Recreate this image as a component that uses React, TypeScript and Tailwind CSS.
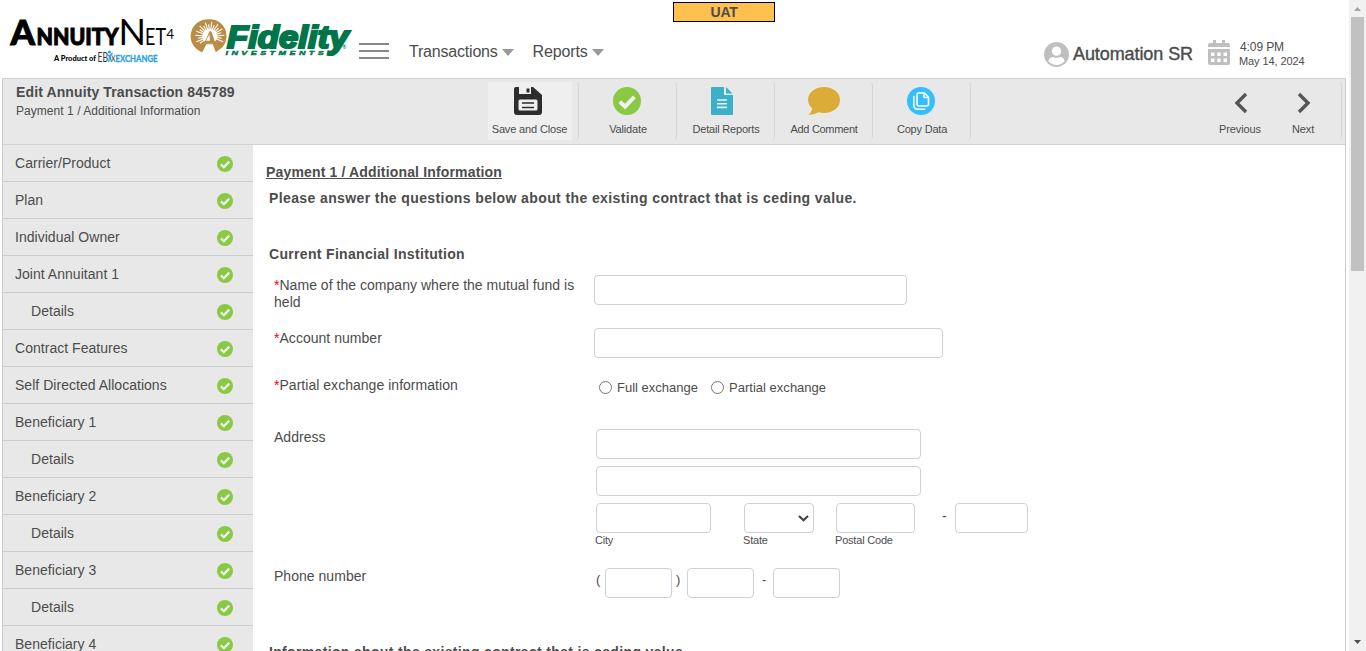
import React from "react";

type Row = { label: string; nested?: boolean };

const steps: Row[] = [
  { label: "Carrier/Product" },
  { label: "Plan" },
  { label: "Individual Owner" },
  { label: "Joint Annuitant 1" },
  { label: "Details", nested: true },
  { label: "Contract Features" },
  { label: "Self Directed Allocations" },
  { label: "Beneficiary 1" },
  { label: "Details", nested: true },
  { label: "Beneficiary 2" },
  { label: "Details", nested: true },
  { label: "Beneficiary 3" },
  { label: "Details", nested: true },
  { label: "Beneficiary 4" },
];

function CheckBadge({ className }: { className: string }) {
  return (
    <svg viewBox="0 0 28 28" className={className}>
      <circle cx="14" cy="14" r="14" fill="#8ac943" />
      <path d="M6.8 14.6 L12 19.6 L21.4 9.8" fill="none" stroke="#f1f1f1" strokeWidth="4" />
    </svg>
  );
}

function AnnuityNetLogo() {
  return (
    <svg viewBox="0 0 170 48" className="h-12 w-[170px] shrink-0 overflow-visible">
      <g fill="#000" fontFamily="Lato, sans-serif">
        <g stroke="#000" strokeWidth="1">
          <text x="1.500" y="28" fontSize="35" fontWeight="900" textLength="24.500" lengthAdjust="spacingAndGlyphs">A</text>
          <text x="27.500" y="28" fontSize="23" fontWeight="900" textLength="82" lengthAdjust="spacingAndGlyphs">NNUITY</text>
        </g>
        <text x="109.500" y="28.300" fontSize="36" fontWeight="400" textLength="27.500" lengthAdjust="spacingAndGlyphs">N</text>
        <text x="136" y="28.300" fontSize="23.500" fontWeight="400" textLength="21" lengthAdjust="spacingAndGlyphs">ET</text>
        <text x="157.500" y="21.500" fontSize="12.500" textLength="7.500" lengthAdjust="spacingAndGlyphs">4</text>
        <text x="45" y="43.700" fontSize="8" fontWeight="900" textLength="42" lengthAdjust="spacingAndGlyphs">A Product of</text>
      </g>
      <g fontFamily="Lato, sans-serif">
        <text x="88.500" y="45" fontSize="12.500" fill="#333" textLength="10.500" lengthAdjust="spacingAndGlyphs">EB</text>
        <text x="102" y="45" fontSize="9" fill="#333" textLength="4.500" lengthAdjust="spacingAndGlyphs">X</text>
        <text x="106.500" y="44.700" fontSize="8.800" fontWeight="700" fill="#2c9fdd" stroke="#2c9fdd" strokeWidth=".3" textLength="42" lengthAdjust="spacingAndGlyphs">EXCHANGE</text>
      </g>
      <circle cx="100.500" cy="35" r="1.500" fill="#2c9fdd" />
      <path d="M98 37.500 L100.500 39 L103.500 36 M100.500 38 L99.800 45 M101 39 L102.500 45" stroke="#2c9fdd" strokeWidth="1.300" fill="none" />
    </svg>
  );
}

const rayAngles = [-160, -147, -134, -121, -108, -95, -82, -69, -56, -43, -30, -17, -4, 9, 22, 145, 158, 171, 184];

function FidelityLogo() {
  return (
    <svg viewBox="0 0 162 40" className="h-10 w-[162px] shrink-0 overflow-visible">
      <g transform="translate(0.3 0.3)">
        <path d="M18 0 A16.700 16.700 0 0 1 27 30.800 L24 33 L21 25 L14.500 25 L10.500 33 A17 17 0 0 1 18 0Z" fill="#b98d45" transform="translate(1.500 0)" />
        <g transform="translate(1.500 0)">
          <g stroke="#fff" strokeWidth="1.100">
            {rayAngles.map((a, i) => {
              const r = (a * Math.PI) / 180;
              const far = i % 2 === 0 ? 14.5 : 12;
              return (
                <path
                  key={a}
                  d={`M${18 + Math.cos(r) * 5} ${17 + Math.sin(r) * 5} L${18 + Math.cos(r) * far} ${17 + Math.sin(r) * far}`}
                />
              );
            })}
          </g>
          <circle cx="18" cy="17" r="7.500" fill="#fff" />
          <path d="M9.500 30 L17.800 12 L19.500 12 L26 31 L21 24.500 L13.500 24.500 L10.500 33Z" fill="#b98d45" />
          <path d="M14.200 21.500 L17.600 15 L18.300 21.500Z" fill="#fff" />
        </g>
      </g>
      <g fill="#00754a" fontFamily="'Liberation Sans', Arial, sans-serif" fontStyle="italic" fontWeight="700">
        <text x="37" y="29" fontSize="30.500" stroke="#00754a" strokeWidth="2.200" textLength="121.500" lengthAdjust="spacingAndGlyphs">Fidelity</text>
        <g stroke="#00754a" strokeWidth=".4">
          <text x="35.500" y="36" fontSize="6" transform="translate(35.500 0) scale(1.5 1) translate(-35.500 0)" textLength="65.500" lengthAdjust="spacing">INVESTMENTS</text>
        </g>
        <text x="152.500" y="29.500" fontSize="5" fontStyle="normal">®</text>
      </g>
    </svg>
  );
}

function SaveIcon() {
  return (
    <svg viewBox="0 0 28 28" className="mr-0.5 h-7 w-7">
      <path d="M2 0H5V7H17V0H19L28 8V25Q28 28 25 28H3Q0 28 0 25V2Q0 0 2 0Z" fill="#2d2d2d" />
      <path d="M12.500 1.500h3v4h-3z" fill="#2d2d2d" />
      <rect x="4.500" y="12.500" width="19" height="11" rx="1.500" fill="#eee" />
      <path d="M8 16H20M8 20.500H20" stroke="#2d2d2d" strokeWidth="1.500" />
    </svg>
  );
}

function ReportIcon() {
  return (
    <svg viewBox="0 0 22 28" className="mr-[5px] h-7 w-[22px]">
      <path d="M1 0H13V8H22V27Q22 28 21 28H1Q0 28 0 27V1Q0 0 1 0Z" fill="#3bb0c9" />
      <path d="M15 0L21.500 6.500H15Z" fill="#3bb0c9" />
      <path d="M6 13H16M6 16.700H16M6 20.400H16" stroke="#ecf3f4" strokeWidth="1.600" />
    </svg>
  );
}

function CommentIcon() {
  return (
    <svg viewBox="0 0 32 28" className="ml-[3px] h-7 w-8">
      <path d="M16 0C25 0 32 5.500 32 13S25 26 16 26Q13 26 10.500 25.200Q6 28 .5 28Q4 24.500 4.200 21.500Q0 17.500 0 13C0 5.500 7 0 16 0Z" fill="#dbad38" />
    </svg>
  );
}

function CopyIcon() {
  return (
    <svg viewBox="0 0 28 28" className="h-7 w-7">
      <circle cx="14" cy="14" r="14" fill="#33bfff" />
      <g fill="none" stroke="#fff" strokeWidth="1.600" strokeLinejoin="round" strokeLinecap="round">
        <path d="M11.500 6H17.500L21.500 10V17Q21.500 19 19.500 19H12Q10 19 10 17V7.500Q10 6 11.500 6Z" />
        <path d="M17 6.500V10.500H21" />
        <path d="M6.800 9.500V18Q6.800 22.300 11 22.300H17.500" />
      </g>
    </svg>
  );
}

function Tool({ label, icon, active, spacing }: { label: string; icon: React.ReactNode; active?: boolean; spacing: string }) {
  return (
    <div className="flex h-[58px] w-[98px] shrink-0">
      <button className={`flex w-[84px] flex-col items-center pt-[5px] ${active ? "bg-[#efefef]" : ""}`}>
        <span className="mr-[3px] flex h-7">{icon}</span>
        <span className={`mt-[7px] whitespace-nowrap text-[11px] leading-[14px] ${spacing}`}>{label}</span>
      </button>
      <div className="w-[7px] rounded-r-sm border-r border-[#d6d6d6]" />
    </div>
  );
}

function Menu({ label, spacing }: { label: string; spacing: string }) {
  return (
    <div className="flex items-center gap-1">
      <span className={`text-base leading-5 ${spacing}`}>{label}</span>
      <svg viewBox="0 0 12 7" className="mt-px h-[7px] w-3">
        <path d="M0 0H12L6 7Z" fill="#999" />
      </svg>
    </div>
  );
}

function Field({ className }: { className: string }) {
  return <input type="text" className={`h-[30px] shrink-0 rounded-[4px] border border-[#ced0da] bg-white ${className}`} />;
}

function Label({ children, required }: { children: React.ReactNode; required?: boolean }) {
  return (
    <div className={`w-[320px] shrink-0 pr-4 text-sm leading-[17px] tracking-[0.03px] ${required ? "pt-0.5" : ""}`}>
      {required && <span className="text-[#f00]">*</span>}
      {children}
    </div>
  );
}

function Radio({ label }: { label: string }) {
  return (
    <label className="flex items-center gap-[5px]">
      <span className="h-[13px] w-[13px] rounded-full border border-[#767676] bg-white" />
      <span className="pt-px text-[13px] leading-4 tracking-[0.01px]">{label}</span>
    </label>
  );
}

export default function App() {
  return (
    <div className="flex h-[651px] w-[1366px] overflow-hidden bg-white font-['Liberation_Sans',Arial,sans-serif] text-[#4c4c4c]">
      <div className="flex w-[1349px] shrink-0 flex-col pl-0.5 pr-[3px]">
        <header className="relative flex h-[78px] shrink-0">
          <div className="pl-[7px] pt-[17px]"><AnnuityNetLogo /></div>
          <div className="pl-[11px] pt-[19px]"><FidelityLogo /></div>
          <div className="ml-[7px] mt-[43px] flex h-4 w-[30px] flex-col justify-between">
            <span className="h-0.5 bg-[#888]" />
            <span className="h-0.5 bg-[#888]" />
            <span className="h-0.5 bg-[#888]" />
          </div>
          <div className="ml-5 mt-[42px] flex h-5 gap-[19px]">
            <Menu label="Transactions" spacing="tracking-[-0.2px]" />
            <Menu label="Reports" spacing="tracking-[-0.15px]" />
          </div>
          <div className="absolute left-[671px] top-[2px] h-5 w-[102px] border border-black bg-[#ffc04d] text-center text-sm font-bold leading-[18px] tracking-[-0.3px]">UAT</div>
          <div className="ml-auto mr-[41px] flex pt-[39px]">
            <svg viewBox="0 0 26 26" className="mt-[3px] h-[25px] w-[25px]">
              <circle cx="13" cy="13" r="13" fill="#bfbfbf" />
              <circle cx="13" cy="9.500" r="4.800" fill="#fff" />
              <path d="M4.500 20Q5.500 15.500 9.500 15.500Q13 17.500 16.500 15.500Q20.500 15.500 21.500 20Q18 23.800 13 23.800T4.500 20Z" fill="#fff" />
            </svg>
            <span className="ml-1 mt-1 whitespace-nowrap text-lg leading-[22px] tracking-[-0.08px] [-webkit-text-stroke:0.4px_#4c4c4c]">Automation SR</span>
            <svg viewBox="0 0 22 25" className="ml-[15px] mt-px h-[25px] w-[22px]">
              <path d="M5 0H8V3H14V0H17V3H20Q22 3 22 5V7H0V5Q0 3 2 3H5Z" fill="#bfbfbf" />
              <path d="M0 9H22V23Q22 25 20 25H2Q0 25 0 23Z" fill="#bfbfbf" />
              <path d="M3 12.500h3.500v3.500H3zM9.200 12.500h3.500v3.500H9.200zM15.500 12.500H19v3.500h-3.500zM3 18.500h3.500V22H3zM9.200 18.500h3.500V22H9.200zM15.500 18.500H19V22h-3.500z" fill="#fff" />
            </svg>
            <div className="ml-[9px] w-[66px] whitespace-nowrap text-[11px] leading-[14px] tracking-[-0.1px]">
              <div className="pl-px pt-px text-xs leading-[14px]">4:09 PM</div>
              <div>May 14, 2024</div>
            </div>
          </div>
        </header>

        <div className="flex h-[67px] shrink-0 border border-b-[#d3d3d3] border-l-[#ccc] border-r-[#ccc] border-t-[#d3d3d3] bg-[#e8e8e8]">
          <div className="w-[485px] shrink-0 pl-[13px] pt-[5px]">
            <div className="text-sm font-bold leading-4 tracking-[0.12px]">Edit Annuity Transaction 845789</div>
            <div className="mt-[3px] text-xs leading-4 tracking-[0.05px]">Payment 1 / Additional Information</div>
          </div>
          <div className="flex pt-[3px]">
            <Tool label="Save and Close" icon={<SaveIcon />} active spacing="tracking-[-0.15px] pr-px" />
            <Tool label="Validate" icon={<CheckBadge className="h-7 w-7" />} spacing="tracking-[-0.15px]" />
            <Tool label="Detail Reports" icon={<ReportIcon />} spacing="tracking-[-0.2px]" />
            <Tool label="Add Comment" icon={<CommentIcon />} spacing="tracking-[-0.3px]" />
            <Tool label="Copy Data" icon={<CopyIcon />} spacing="tracking-[-0.2px]" />
          </div>
          <div className="ml-auto mr-[3px] mt-[3px] flex h-[58px] self-start rounded-r-sm border-r border-[#d6d6d6] pr-[26px] pt-2.5 text-[11px] leading-[14px] tracking-[-0.1px]">
            <div className="flex w-[44px] flex-col items-center">
              <svg viewBox="0 0 14 22" className="ml-px h-[22px] w-3.5"><path d="M12 2L3 11L12 20" fill="none" stroke="#555" strokeWidth="3.400" /></svg>
              <span className="mt-2">Previous</span>
            </div>
            <div className="ml-[29px] flex w-[24px] flex-col items-center">
              <svg viewBox="0 0 14 22" className="ml-0.5 h-[22px] w-3.5"><path d="M2 2L11 11L2 20" fill="none" stroke="#555" strokeWidth="3.400" /></svg>
              <span className="mt-2">Next</span>
            </div>
          </div>
        </div>

        <div className="flex min-h-0 flex-1 border-x border-[#ccc]">
          <nav className="w-[250px] shrink-0 overflow-hidden bg-[#e8e8e8]">
            {steps.map((s, i) => (
              <div key={i} className={`flex h-[37px] items-center justify-between border-b border-[#ccc] pr-5 ${s.nested ? "pl-7" : "pl-3"}`}>
                <span className="text-sm leading-5 tracking-[0.03px]">{s.label}</span>
                <CheckBadge className="mt-0.5 h-4 w-4" />
              </div>
            ))}
          </nav>
          <main className="flex min-w-0 flex-1 flex-col overflow-hidden pl-[13px]">
            <h1 className="mt-[17px] h-5 shrink-0 text-sm font-bold leading-5 tracking-[0.16px] underline">Payment 1 / Additional Information</h1>
            <h2 className="ml-[3px] mt-[6px] h-5 shrink-0 text-sm font-bold leading-5 tracking-[0.39px]">Please answer the questions below about the existing contract that is ceding value.</h2>
            <h2 className="ml-[3px] mt-9 h-5 shrink-0 text-sm font-bold leading-5 tracking-[0.32px]">Current Financial Institution</h2>
            <div className="ml-2 mt-[11px] flex h-[53px] shrink-0 items-start">
              <Label required>Name of the company where the mutual fund is held</Label>
              <Field className="w-[313px]" />
            </div>
            <div className="ml-2 flex h-[53px] shrink-0 items-start">
              <Label required>Account number</Label>
              <Field className="w-[349px]" />
            </div>
            <div className="ml-2 flex h-12 shrink-0 items-start">
              <div className="-mt-[6px]"><Label required>Partial exchange information</Label></div>
              <div className="-mt-[2px] flex gap-[13px] pl-[5px]">
                <Radio label="Full exchange" />
                <Radio label="Partial exchange" />
              </div>
            </div>
            <div className="ml-2 flex h-[139px] shrink-0 items-start">
              <Label>Address</Label>
              <div className="ml-0.5 flex flex-col gap-[7px]">
                <Field className="w-[325px]" />
                <Field className="w-[325px]" />
                <div className="flex text-[11px] leading-[14px] tracking-[-0.2px]">
                  <div className="flex w-[148px] flex-col"><Field className="w-[115px]" /><span className="-ml-px">City</span></div>
                  <div className="flex w-[92px] flex-col">
                    <div className="flex h-[30px] w-[70px] items-center justify-end rounded-[4px] border border-[#ced0da] pr-1">
                      <svg viewBox="0 0 11 7" className="h-[7px] w-[11px]"><path d="M1 1L5.500 5.300L10 1" fill="none" stroke="#444" strokeWidth="2.200" /></svg>
                    </div>
                    <span className="-ml-px">State</span>
                  </div>
                  <div className="flex w-[106px] flex-col"><Field className="w-[79px]" /><span className="-ml-px">Postal Code</span></div>
                  <span className="w-[13px] pt-[5px] text-sm leading-4">-</span>
                  <Field className="w-[73px]" />
                </div>
              </div>
            </div>
            <div className="ml-2 flex h-[74px] shrink-0 items-start">
              <Label>Phone number</Label>
              <div className="ml-0.5 flex text-[13px] leading-6">
                <span className="w-[9px]">(</span>
                <Field className="w-[67px]" />
                <span className="w-[15px] pl-1">)</span>
                <Field className="w-[67px]" />
                <span className="w-[19px] pl-2">-</span>
                <Field className="w-[67px]" />
              </div>
            </div>
            <h2 className="ml-[3px] h-5 shrink-0 text-sm font-bold leading-5 tracking-[0.34px]">Information about the existing contract that is ceding value</h2>
          </main>
        </div>
      </div>

      <aside className="flex w-[17px] shrink-0 flex-col items-center bg-[#f1f1f1]">
        <svg viewBox="0 0 17 17" className="h-[17px] w-[17px] shrink-0"><path d="M5 11L8.500 7L12 11Z" fill="#a3a3a3" /></svg>
        <div className="h-[254px] w-[13px] shrink-0 bg-[#c1c1c1]" />
        <svg viewBox="0 0 17 17" className="mt-auto h-[17px] w-[17px] shrink-0"><path d="M5 6L8.500 10L12 6Z" fill="#505050" /></svg>
      </aside>
    </div>
  );
}
